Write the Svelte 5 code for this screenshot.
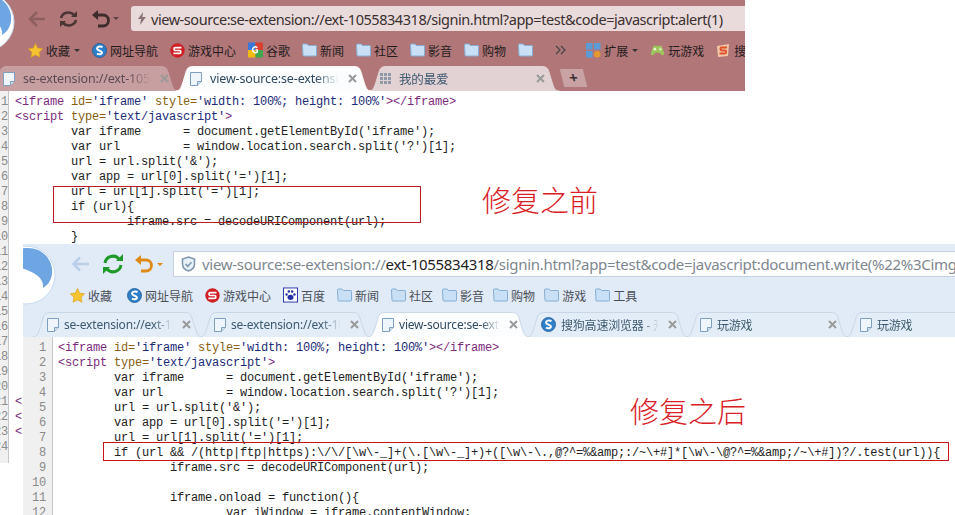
<script>
  // Two browser screenshots pasted on a white page, with red notes on top.
  const topBookmarks = [
    { icon: 'star', text: '收藏', caret: true },
    { icon: 'sogou', text: '网址导航' },
    { icon: 'game', text: '游戏中心' },
    { icon: 'google', text: '谷歌' },
    { icon: 'folder', text: '新闻' },
    { icon: 'folder', text: '社区' },
    { icon: 'folder', text: '影音' },
    { icon: 'folder', text: '购物' },
    { icon: 'folder', text: '' },
    { icon: 'more', text: '', cls: 'more' },
    { icon: 'grid', text: '扩展', caret: true, cls: 'ext' },
    { icon: 'pad', text: '玩游戏' },
    { icon: 'sg', text: '搜狗' }
  ];
  const lowBookmarks = [
    { icon: 'star', text: '收藏', cls: 'wide' },
    { icon: 'sogou', text: '网址导航' },
    { icon: 'game', text: '游戏中心' },
    { icon: 'paw', text: '百度' },
    { icon: 'folder', text: '新闻' },
    { icon: 'folder', text: '社区' },
    { icon: 'folder', text: '影音', cls: 'tight' },
    { icon: 'folder', text: '购物', cls: 'tight' },
    { icon: 'folder', text: '游戏', cls: 'tight' },
    { icon: 'folder', text: '工具', cls: 'tight' }
  ];
  const topTabs = [
    { w: 190, title: 'se-extension://ext-1055834318', icon: 'page', cls: 'first' },
    { w: 197, title: 'view-source:se-extension://ext', icon: 'page', active: true },
    { w: 192, title: '我的最爱', icon: 'apps', cls: 'third' }
  ];
  const lowTabs = [
    { w: 171, title: 'se-extension://ext-1055', icon: 'page' },
    { w: 172, title: 'se-extension://ext-1055', icon: 'page' },
    { w: 163, title: 'view-source:se-extension', icon: 'page', active: true },
    { w: 163, title: '搜狗高速浏览器 - 开放平台', icon: 'sogou' },
    { w: 164, title: '玩游戏', icon: 'page' },
    { w: 164, title: '玩游戏', icon: 'page' }
  ];

  const head = [
    [['t', '<iframe '], ['a', 'id='], ['v', "'iframe' "], ['a', 'style='], ['v', "'width: 100%; height: 100%'"], ['t', '></iframe>']],
    [['t', '<script '], ['a', 'type='], ['v', "'text/javascript'"], ['t', '>']]
  ];
  const plain = (s) => [['p', s]];
  const shared = [
    "        var iframe      = document.getElementById('iframe');",
    "        var url         = window.location.search.split('?')[1];",
    "        url = url.split('&');",
    "        var app = url[0].split('=')[1];",
    "        url = url[1].split('=')[1];"
  ];
  const before = [
    ...head,
    ...shared.map(plain),
    plain('        if (url){'),
    plain('                iframe.src = decodeURIComponent(url);'),
    plain('        }'),
    ...Array(10).fill(plain(' ')),
    [['t', '<\/script>']],
    [['t', '<script>']],
    [['t', '<script>']],
    plain(' ')
  ];
  const after = [
    ...head,
    ...shared.map(plain),
    plain('        if (url && /(http|ftp|https):\\/\\/[\\w\\-_]+(\\.[\\w\\-_]+)+([\\w\\-\\.,@?^=%&amp;:/~\\+#]*[\\w\\-\\@?^=%&amp;/~\\+#])?/.test(url)){'),
    plain('                iframe.src = decodeURIComponent(url);'),
    plain(' '),
    plain('                iframe.onload = function(){'),
    plain('                        var iWindow = iframe.contentWindow;')
  ];

  const tabPath = (w) => `M0.5 25 C5 25 6 22 8 16 L11 6 C12 2 14 0.5 18 0.5 H${w - 18} C${w - 14} 0.5 ${w - 12} 2 ${w - 11} 6 L${w - 8} 16 C${w - 6} 22 ${w - 5} 25 ${w - 0.5} 25`;
</script>

{#snippet icon(name)}
  {#if name === 'star'}
    <svg width="15" height="15" viewBox="0 0 15 15"><path d="M7.5 0.5l2.2 4.6 5 .7-3.6 3.5.9 5-4.5-2.4-4.5 2.4.9-5L0.3 5.8l5-.7z" fill="#f5c430" stroke="#d99a1c" stroke-width=".6"/></svg>
  {:else if name === 'sogou'}
    <svg width="15" height="15" viewBox="0 0 15 15"><circle cx="7.5" cy="7.5" r="7" fill="#2f7fc8" stroke="#1d5a98" stroke-width=".8"/><path d="M10.5 4C8 2.8 5 3.6 5 5.6c0 2.4 5 1.8 5 4 0 1.6-2.6 2.2-5 1" fill="none" stroke="#fff" stroke-width="2"/></svg>
  {:else if name === 'game'}
    <svg width="15" height="15" viewBox="0 0 15 15"><circle cx="7.5" cy="7.5" r="7.2" fill="#d01f24"/><path d="M11.5 4.6H5.2c-1.6 0-1.6 2.9 0 2.9h4.4c1.6 0 1.6 2.9 0 2.9H3.4" fill="none" stroke="#fff" stroke-width="1.7"/></svg>
  {:else if name === 'google'}
    <svg width="16" height="16" viewBox="0 0 16 16"><rect width="8" height="8" fill="#3b78d8"/><rect x="8" width="8" height="8" fill="#d8402f"/><rect y="8" width="8" height="8" fill="#f2b90f"/><rect x="8" y="8" width="8" height="8" fill="#3ea84a"/><path d="M10 5.5a3 3 0 1 0 0 4.5V8H8" fill="none" stroke="#fff" stroke-width="1.5"/></svg>
  {:else if name === 'folder'}
    <svg width="15" height="14" viewBox="0 0 15 14"><path d="M.5 3V2q0-1 1-1h3.5l1.5 1.5h7.5q.5 0 .5 1V12q0 1-1 1h-12q-.5 0-.5-1z" fill="#c8dff5" stroke="#86aed2"/></svg>
  {:else if name === 'more'}
    <svg width="11" height="10" viewBox="0 0 11 10"><path d="M1 1l4 4-4 4M6 1l4 4-4 4" fill="none" stroke="#444" stroke-width="1.1"/></svg>
  {:else if name === 'grid'}
    <svg width="15" height="15" viewBox="0 0 15 15"><rect width="6.5" height="6.5" fill="#5b9bd8"/><rect x="8" width="6.5" height="6.5" fill="#5b9bd8"/><rect y="8" width="6.5" height="6.5" fill="#5b9bd8"/><circle cx="11.2" cy="11.2" r="3.2" fill="#e69a2c"/></svg>
  {:else if name === 'pad'}
    <svg width="17" height="15" viewBox="0 0 17 15"><path d="M4 2h9l3 8c.6 2.500-2 4-3.500 2L11 10H6l-1.500 2C3 14 .4 12.500 1 10z" fill="#9cc65c"/><circle cx="5.500" cy="6" r="1.500" fill="#e8f4d0"/><path d="M10 6h3.400M11.700 4.300v3.400" stroke="#e8f4d0" stroke-width="1"/></svg>
  {:else if name === 'sg'}
    <svg width="15" height="15" viewBox="0 0 15 15"><path d="M1 3l12-2-1 12-10 1z" fill="#f0c8a8"/><path d="M11 4.500H5.500c-1.500 0-1.500 3 0 3H9c1.600 0 1.600 3 0 3H3.500" fill="none" stroke="#e2502a" stroke-width="1.800"/></svg>
  {:else if name === 'paw'}
    <svg width="16" height="16" viewBox="0 0 16 16"><rect x=".5" y=".5" width="15" height="15" fill="#fff" stroke="#2230a8"/><g fill="#2230a8"><ellipse cx="8" cy="10.500" rx="3.200" ry="2.800"/><circle cx="3.800" cy="7.500" r="1.300"/><circle cx="12.200" cy="7.500" r="1.300"/><circle cx="6.200" cy="4.200" r="1.300"/><circle cx="9.800" cy="4.200" r="1.300"/></g></svg>
  {:else if name === 'page'}
    <svg width="12" height="14" viewBox="0 0 12 14"><path d="M.5.500h11v9l-4 4h-7z" fill="#eef5fc" stroke="#7f9fc0"/><path d="M11.500 9.500h-4v4" fill="#cfe0f0" stroke="#7f9fc0"/></svg>
  {:else if name === 'apps'}
    <svg width="11" height="11" viewBox="0 0 11 11" fill="#8f9aa6"><rect width="3" height="3"/><rect x="4" width="3" height="3"/><rect x="8" width="3" height="3"/><rect y="4" width="3" height="3"/><rect x="4" y="4" width="3" height="3"/><rect x="8" y="4" width="3" height="3"/><rect y="8" width="3" height="3"/><rect x="4" y="8" width="3" height="3"/><rect x="8" y="8" width="3" height="3"/></svg>
  {/if}
{/snippet}

{#snippet logo()}
  <svg width="60" height="60" viewBox="0 0 60 60">
    <circle cx="30" cy="30" r="29" fill="#fff" stroke="#c8dcf2"/>
    <path d="M4 20C8 8 20 3 32 3c12 0 22 8 24 20 1 8-2 16-9 20 1-9-6-14-16-18C20 21 12 17 4 20z" fill="#6ea6e4"/>
    <path d="M2 30c10 0 24 4 24 14 0 6-3 10-8 12C8 52 2 42 2 30z" fill="#6ea6e4"/>
  </svg>
{/snippet}

{#snippet bookmarks(items)}
  <div class="bookmarks">
    {#each items as b}
      <span class="bm {b.cls ?? ''}">
        <span class="bm-icon">{@render icon(b.icon)}</span>
        {#if b.text}<span>{b.text}</span>{/if}
        {#if b.caret}<i class="caret"></i>{/if}
      </span>
    {/each}
  </div>
{/snippet}

{#snippet tabs(items)}
  <div class="tabs">
    {#each items as t}
      <div class="tab {t.cls ?? ''}" class:active={t.active} style="width:{t.w}px">
        <svg class="shape" width={t.w} height="25"><path d={tabPath(t.w)} /></svg>
        <span class="tab-icon">{@render icon(t.icon)}</span>
        <span class="title">{t.title}</span>
        <svg class="close" width="9" height="9" viewBox="0 0 9 9"><path d="M1 1l7 7M8 1l-7 7" /></svg>
      </div>
    {/each}
  </div>
{/snippet}

{#snippet code(lines)}
  <div class="source">
    <div class="gutter">
      {#each lines as _, i}<div>{i + 1}</div>{/each}
    </div>
    <pre class="lines">{#each lines as line}<div>{#each line as [kind, text]}<span class={kind}>{text}</span>{/each}</div>{/each}</pre>
  </div>
{/snippet}

<div class="page">
  <section class="shot before">
    <div class="chrome">
      <div class="logo">{@render logo()}</div>
      <div class="toolbar">
        <svg width="20" height="18" viewBox="0 0 20 18"><path d="M18 9H4M10 2L3 9l7 7" fill="none" stroke="#8d5f60" stroke-width="2.600"/></svg>
        <svg class="reload" width="21" height="18" viewBox="0 0 21 18"><path d="M3 8a7.500 7 0 0 1 13-3M18 10a7.500 7 0 0 1-13 3" fill="none" stroke="#4a3434" stroke-width="2.600"/><path d="M13 7h6V1zM8 11H2v6z" fill="#4a3434"/></svg>
        <svg class="undo" width="20" height="18" viewBox="0 0 20 18"><path d="M5 5h7a5 5 0 0 1 0 11H7" fill="none" stroke="#3e2c2c" stroke-width="2.800"/><path d="M7 0v10L1 5z" fill="#3e2c2c"/></svg>
        <i class="caret small"></i>
        <div class="address">
          <svg width="8" height="13" viewBox="0 0 8 13"><path d="M5 0L0 7h3l-1 6 6-8H4.500z" fill="#8a7475"/></svg>
          <span class="url">view-source:se-extension://ext-1055834318/signin.html?app=test&amp;code=javascript:alert(1)</span>
        </div>
      </div>
      {@render bookmarks(topBookmarks)}
      <div class="tabs-row">
        {@render tabs(topTabs)}
        <div class="plus">+</div>
      </div>
    </div>
    {@render code(before)}
  </section>

  <section class="shot after">
    <div class="chrome">
      <div class="logo">{@render logo()}</div>
      <div class="toolbar">
        <svg width="19" height="16" viewBox="0 0 19 16"><path d="M18 8H3M9 1.500L2.500 8 9 14.500" fill="none" stroke="#b9cfe8" stroke-width="2.600"/></svg>
        <svg class="reload" width="22" height="22" viewBox="0 0 22 22"><path d="M3 10a8 8 0 0 1 14-4M19 12a8 8 0 0 1-14 4" fill="none" stroke="#1f9a2a" stroke-width="3"/><path d="M14 8h7V1zM8 14H1v7z" fill="#1f9a2a"/></svg>
        <svg class="undo" width="20" height="18" viewBox="0 0 20 18"><path d="M5 5h7a5 5 0 0 1 0 11H7" fill="none" stroke="#df8a18" stroke-width="2.800"/><path d="M7 0v10L1 5z" fill="#df8a18"/></svg>
        <i class="caret small"></i>
        <div class="address">
          <svg width="15" height="16" viewBox="0 0 15 16"><path d="M7.500 1l6 2v5c0 3.500-3 6-6 7-3-1-6-3.500-6-7V3z" fill="#e8f0f8" stroke="#7e96ad" stroke-width="1.500"/><path d="M4.500 8l2.300 2.300 3.700-4" fill="none" stroke="#7e96ad" stroke-width="1.500"/></svg>
          <span class="url">view-source:se-extension://<b>ext-1055834318</b>/signin.html?app=test&amp;code=javascript:document.write(%22%3Cimg%22%3E</span>
        </div>
      </div>
      {@render bookmarks(lowBookmarks)}
      <div class="tabs-row">
        {@render tabs(lowTabs)}
      </div>
    </div>
    {@render code(after)}
  </section>

  <div class="note note-before">修复之前</div>
  <div class="note note-after">修复之后</div>
  <div class="box box-before"></div>
  <div class="box box-after"></div>
</div>

<style>
  :global(body) { margin: 0; background: #fff; overflow: hidden; }
  .page { position: relative; width: 955px; height: 515px; overflow: hidden; font-family: "Noto Sans", "Noto Sans CJK SC", sans-serif; }

  .shot { position: absolute; display: flex; flex-direction: column; overflow: hidden; }
  .before { left: 0; top: 0; width: 745px; height: 463px; }
  .after { left: 23px; top: 244px; width: 932px; height: 271px; background: #fff; }

  .chrome { position: relative; flex: none; overflow: hidden; }
  .before .chrome { height: 91px; background: #b07678; }
  .after .chrome { height: 93px; background: #e0ebf7; }

  .logo { position: absolute; }
  .before .logo { left: -45px; top: -8px; }
  .after .logo { left: -27px; top: 1px; }
  .logo svg { display: block; }

  .toolbar { position: relative; display: flex; align-items: center; }
  .toolbar svg, .address svg { flex: none; }
  .before .toolbar { height: 25px; padding: 6px 0 7px 27px; }
  .after .toolbar { height: 26px; padding: 7px 0 4px 48px; }
  .before .reload { margin-left: 11px; }
  .after .reload { margin-left: 12px; }
  .before .undo { margin-left: 12px; }
  .after .undo { margin-left: 10px; }
  .caret { display: inline-block; width: 0; height: 0; border: 3px solid transparent; border-top: 3px solid #333; border-bottom: 0; margin-left: 1px; }
  .caret.small { flex: none; margin-left: 3px; }
  .before .caret.small { margin-left: 2px; border-top-color: #5a4040; }
  .after .caret.small { border-top-color: #df8a18; }

  .address { display: flex; align-items: center; box-sizing: border-box; height: 100%; overflow: hidden; white-space: nowrap; flex: 1; min-width: 0; }
  .before .address { margin-left: 12px; gap: 5px; padding-left: 7px; background: #e9dadb; border-radius: 3px 0 0 3px; color: #3a3030; }
  .after .address { margin-left: 10px; gap: 6px; padding-left: 7px; background: #fff; border: 1px solid #c4d2e2; border-right: 0; color: #7d8790; }
  .url { font-size: 15px; letter-spacing: -0.3px; }
  .before .url { font-size: 14.5px; letter-spacing: -0.45px; }
  .url b { font-weight: 400; color: #222; }

  .bookmarks { position: relative; display: flex; align-items: center; box-sizing: border-box; gap: 12px; white-space: nowrap; font-size: 12px; font-family: "Noto Sans CJK SC", sans-serif; overflow: hidden; }
  .before .bookmarks { height: 28px; padding: 0 0 4px 28px; color: #241c1c; }
  .after .bookmarks { height: 31px; padding: 0 0 3px 47px; color: #4a5058; }
  .bm { display: inline-flex; align-items: center; gap: 3px; flex: none; }
  .bm-icon { display: inline-flex; width: 15px; justify-content: center; }
  .bm.wide { margin-right: 3px; }
  .bm.tight { margin-left: -3px; }
  .bm.more { margin-left: 10px; }
  .bm.more .bm-icon { width: 11px; }
  .bm.ext { margin-left: 8px; }

  .tabs-row { position: relative; display: flex; align-items: flex-start; height: 25px; }
  .tabs { display: flex; }
  .before .tabs { margin-left: -11px; font-size: 12.5px; letter-spacing: -0.15px; }
  .after .tabs { margin-left: 9px; font-size: 12px; letter-spacing: -0.2px; }
  .tab { position: relative; display: flex; align-items: center; flex: none; box-sizing: border-box; height: 25px; color: #3d5a70; margin-right: -4px; }
  .before .tab { padding: 0 15px; }
  .after .tab { padding: 0 12px 0 15px; }
  .shape { position: absolute; left: 0; top: 0; }
  .before .shape path { fill: #c89fa0; stroke: #c89fa0; }
  .before .third .shape path { fill: #e3d2d3; stroke: #e3d2d3; }
  .after .shape path { fill: #e3edf8; stroke: #c8d6e6; }
  .tab.active { z-index: 2; color: #2f4a60; }
  .before .tab.active .shape path, .after .tab.active .shape path { fill: #fbfdff; stroke: #cbd8e8; }
  .before .tab.active .shape path { stroke: #fbf8f8; }
  .before .first { padding: 0 10px 0 14px; color: #5a4a55; }
  .before .third { padding-left: 12px; }
  .tab-icon { position: relative; display: inline-flex; flex: none; }
  .before .tab-icon { margin-right: 8px; }
  .after .tab-icon { margin-right: 5px; }
  .title { position: relative; flex: 1; min-width: 0; overflow: hidden; white-space: nowrap; font-family: "Noto Sans", "Noto Sans CJK SC", sans-serif; mask-image: linear-gradient(to right, #000 82%, transparent 100%); }
  .close { position: relative; flex: none; margin-left: 9px; }
  .close path { fill: none; stroke: #9a9a9a; stroke-width: 2; }
  .plus { margin: 3px 0 0 6px; width: 23px; height: 18px; line-height: 16px; text-align: center; font-size: 15px; font-weight: 700; color: #3c3030; background: #c9a3a4; transform: skewX(14deg); }

  .source { display: flex; flex: 1; min-height: 0; background: #fff; }
  .gutter, .lines { padding-top: 4px; font: 12px/15px "Liberation Mono", monospace; letter-spacing: -0.2px; }
  .gutter { flex: none; box-sizing: border-box; text-align: right; color: #8a8a8a; background: #f0f0f0; border-right: 1px solid #c6c6c6; overflow: hidden; }
  .before .gutter { width: 9px; }
  .after .gutter { width: 30px; padding-right: 6px; }
  .gutter div { height: 15px; }
  .before .gutter div { display: flex; justify-content: flex-end; }
  .lines { margin: 0; color: #222; white-space: pre; overflow: hidden; flex: 1; }
  .before .lines { padding-left: 6px; }
  .after .lines { padding-left: 5px; }
  .lines div { height: 15px; }
  .t { color: #7d2a7d; }
  .a { color: #8a6010; }
  .v { color: #1c2a78; }

  .note { position: absolute; font: 300 29px/34px "Noto Sans CJK SC", sans-serif; color: #d92026; white-space: nowrap; }
  .note-before { left: 482px; top: 182px; }
  .note-after { left: 630px; top: 393px; }
  .box { position: absolute; box-sizing: border-box; border: 1px solid #b81c22; }
  .box-before { left: 53px; top: 186px; width: 368px; height: 37px; }
  .box-after { left: 103px; top: 442px; width: 846px; height: 19px; border-color: #c81418; }
</style>
